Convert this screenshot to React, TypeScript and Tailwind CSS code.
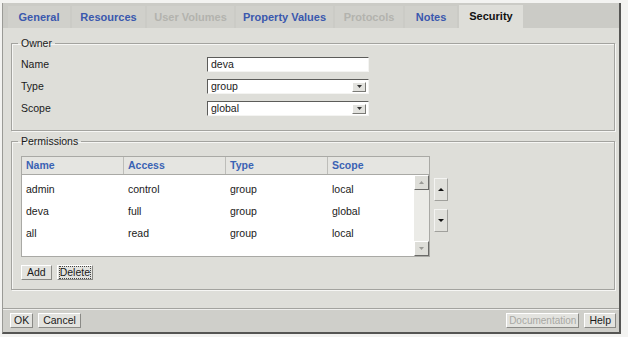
import React from "react";

type Tab = { label: string; width: number; state: "on" | "off" | "selected" };

const tabs: Tab[] = [
  { label: "General", width: 62, state: "on" },
  { label: "Resources", width: 73, state: "on" },
  { label: "User Volumes", width: 87, state: "off" },
  { label: "Property Values", width: 97, state: "on" },
  { label: "Protocols", width: 68, state: "off" },
  { label: "Notes", width: 52, state: "on" },
  { label: "Security", width: 64, state: "selected" },
];

const rows = [
  ["admin", "control", "group", "local"],
  ["deva", "full", "group", "global"],
  ["all", "read", "group", "local"],
];

const columns = ["Name", "Access", "Type", "Scope"];

const Btn = ({
  children,
  disabled,
  focused,
  className = "",
}: {
  children: React.ReactNode;
  disabled?: boolean;
  focused?: boolean;
  className?: string;
}) => (
  <div
    className={`flex h-[15px] items-center justify-center border border-t-white border-l-white border-r-[#8a8a86] border-b-[#8a8a86] bg-[#e3e3df] leading-none ${
      disabled ? "text-[#a8a8a4]" : "text-[#1a1a1a]"
    } ${className}`}
  >
    <span className={focused ? "outline outline-1 outline-dotted outline-[#444]" : ""}>
      {children}
    </span>
  </div>
);

const Triangle = ({
  up,
  color = "#111",
  w = 7,
  h = 4,
}: {
  up?: boolean;
  color?: string;
  w?: number;
  h?: number;
}) => (
  <svg width={w} height={h} viewBox={`0 0 ${w} ${h}`}>
    {up ? (
      <path d={`M0 ${h} L${w / 2} 0 L${w} ${h} Z`} fill={color} />
    ) : (
      <path d={`M0 0 L${w} 0 L${w / 2} ${h} Z`} fill={color} />
    )}
  </svg>
);

const Field = ({ value, select }: { value: string; select?: boolean }) => (
  <div className="flex h-[15px] w-[162px] items-center border border-t-[#5c5c5a] border-l-[#5c5c5a] border-r-[#f4f4f2] border-b-[#f4f4f2] bg-white pl-[3px] pr-[2px]">
    <span className="flex-1 leading-none">{value}</span>
    {select && (
      <div className="flex h-[10px] w-[14px] items-center justify-center border border-t-white border-l-white border-r-[#7a7a76] border-b-[#7a7a76] bg-[#e2e2de]">
        <Triangle color="#333" w={5} h={3} />
      </div>
    )}
  </div>
);

const Group = ({
  title,
  children,
  className = "",
}: {
  title: string;
  children: React.ReactNode;
  className?: string;
}) => (
  <fieldset
    className={`ml-[8px] w-[604px] border border-[#a3a39f] shadow-[inset_1px_1px_0_#f6f6f4,1px_1px_0_#f6f6f4] ${className}`}
  >
    <legend className="ml-[6px] px-[3px] leading-[13px] text-[#1a1a1a]">{title}</legend>
    {children}
  </fieldset>
);

export default function App() {
  return (
    <div className="h-[337px] w-[628px] bg-[#f3f3f1] pt-[3px] font-['Liberation_Sans',Arial,sans-serif] text-[10.5px] text-[#1a1a1a]">
      <div className="ml-[2px] flex h-[331px] w-[619px] flex-col border-l border-l-[#9a9a96] border-r-2 border-r-[#555553] border-b-2 border-b-[#555553]">
        {/* tabs */}
        <div className="flex h-[25px] items-end gap-[2px] bg-[#cbcbc6] pl-[5px]">
          {tabs.map((t) => (
            <div
              key={t.label}
              style={{ width: t.width }}
              className={`flex h-[22px] items-center justify-center text-[11px] font-bold ${
                t.state === "selected"
                  ? "h-[23px] bg-[#deded9] text-[#111]"
                  : t.state === "off"
                  ? "bg-[#d0d0cb] text-[#b3b3ae]"
                  : "bg-[#d0d0cb] text-[#3a58ae]"
              }`}
            >
              {t.label}
            </div>
          ))}
        </div>

        {/* content */}
        <div className="flex-1 bg-[#deded9] pt-[9px]">
          <Group title="Owner" className="pb-[14px]">
            <div className="flex flex-col gap-[7px] pl-[9px] pt-[7px]">
              {[
                ["Name", "deva", false],
                ["Type", "group", true],
                ["Scope", "global", true],
              ].map(([label, value, select]) => (
                <div key={label as string} className="flex h-[15px] items-center">
                  <span className="w-[186px] leading-none">{label as string}</span>
                  <Field value={value as string} select={select as boolean} />
                </div>
              ))}
            </div>
          </Group>

          <Group title="Permissions" className="mt-[4px] pb-[9px]">
            <div className="pl-[9px] pt-[8px]">
              <div className="flex">
                <div className="w-[409px] border border-[#a9a9a5]">
                  <div className="flex h-[18px] border-b border-[#a9a9a5] bg-[#e5e5e1]">
                    {columns.map((c, i) => (
                      <div
                        key={c}
                        className={`flex items-center pl-[4px] font-bold text-[#3a62b4] ${
                          i < 3 ? "w-[102px] border-r border-[#bdbdb9]" : "flex-1"
                        }`}
                      >
                        {c}
                      </div>
                    ))}
                  </div>
                  <div className="flex h-[81px] bg-white">
                    <div className="w-[392px] pt-[4px]">
                      {rows.map((r) => (
                        <div key={r[0]} className="flex h-[22px] items-center">
                          {r.map((v, i) => (
                            <div key={i} className={`${i < 3 ? "w-[102px]" : "flex-1"} pl-[4px]`}>
                              {v}
                            </div>
                          ))}
                        </div>
                      ))}
                    </div>
                    <div className="flex w-[15px] shrink-0 flex-col justify-between bg-[#ebebe7]">
                      <div className="flex h-[15px] items-center justify-center border border-t-white border-l-white border-r-[#6a6a68] border-b-[#6a6a68] bg-[#deded9]">
                        <Triangle up color="#9a9a96" w={5} h={3} />
                      </div>
                      <div className="flex h-[15px] items-center justify-center border border-t-white border-l-white border-r-[#6a6a68] border-b-[#6a6a68] bg-[#deded9]">
                        <Triangle color="#9a9a96" w={5} h={3} />
                      </div>
                    </div>
                  </div>
                </div>
                <div className="ml-[4px] flex flex-col gap-[8px] pt-[22px]">
                  <div className="flex h-[23px] w-[14px] items-center justify-center border border-t-[#f4f4f2] border-l-[#f4f4f2] border-r-[#a0a09c] border-b-[#a0a09c] bg-[#e0e0db]">
                    <Triangle up w={6} h={3} />
                  </div>
                  <div className="flex h-[23px] w-[14px] items-center justify-center border border-t-[#f4f4f2] border-l-[#f4f4f2] border-r-[#a0a09c] border-b-[#a0a09c] bg-[#e0e0db]">
                    <Triangle w={6} h={3} />
                  </div>
                </div>
              </div>
              <div className="mt-[8px] flex gap-[5px]">
                <Btn className="px-[5px]">Add</Btn>
                <Btn className="px-[2px]" focused>
                  Delete
                </Btn>
              </div>
            </div>
          </Group>
        </div>

        {/* footer */}
        <div className="flex h-[24px] items-center border-t border-t-[#a3a39f] bg-[#cfcfca] pl-[7px] pr-[3px] shadow-[inset_0_1px_0_#eeeeec]">
          <Btn className="px-[3px]">OK</Btn>
          <Btn className="ml-[5px] px-[4px]">Cancel</Btn>
          <div className="flex-1" />
          <Btn className="px-[2px] text-[10px]" disabled>
            Documentation
          </Btn>
          <Btn className="ml-[5px] px-[4px]">Help</Btn>
        </div>
      </div>
    </div>
  );
}
